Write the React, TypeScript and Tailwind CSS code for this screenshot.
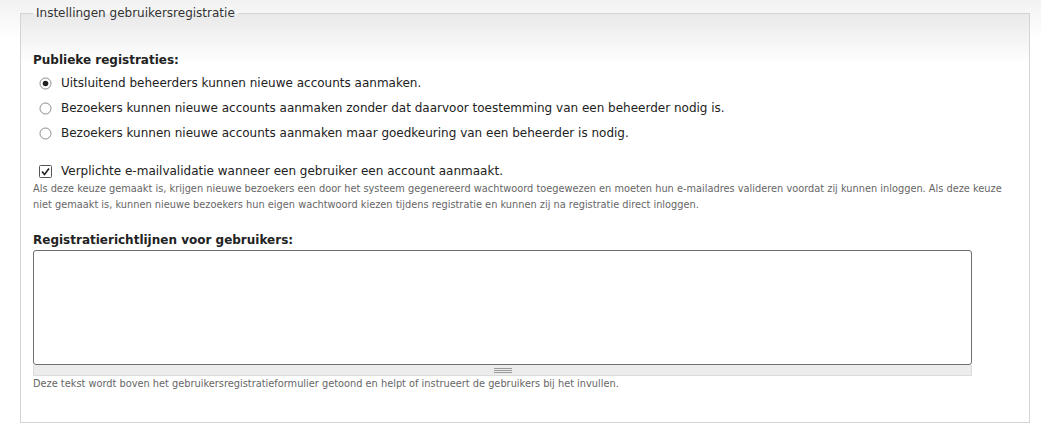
const font = "font-['DejaVu_Sans',sans-serif]"

const Radio = ({ checked }: { checked?: boolean }) => (
  <svg width="13" height="13" viewBox="0 0 13 13" className="shrink-0">
    <circle cx="6.5" cy="6.5" r="5.5" fill="#fff" stroke="#8a8a8a" strokeWidth="1" />
    {checked && <circle cx="6.5" cy="6.5" r="2.8" fill="#222" />}
  </svg>
)

const Check = () => (
  <svg width="13" height="13" viewBox="0 0 13 13" className="shrink-0">
    <rect x="0.5" y="0.5" width="12" height="12" rx="1" fill="#fff" stroke="#555" />
    <path d="M3 6.5 L5.5 9.5 L10 3.5" fill="none" stroke="#222" strokeWidth="1.6" />
  </svg>
)

const options = [
  { label: 'Uitsluitend beheerders kunnen nieuwe accounts aanmaken.', checked: true },
  { label: 'Bezoekers kunnen nieuwe accounts aanmaken zonder dat daarvoor toestemming van een beheerder nodig is.' },
  { label: 'Bezoekers kunnen nieuwe accounts aanmaken maar goedkeuring van een beheerder is nodig.' },
]

export default function App() {
  return (
    <div className={`${font} w-[1041px] h-[425px] bg-[linear-gradient(#f2f2f2,#fff_40px)] pt-[6px] pl-[20px] text-[#222]`}>
      <fieldset className="w-[1010px] h-[417px] border border-[#d4d4d4] bg-[linear-gradient(#e9e9e9,#fff_50px)] pl-[12px] pr-[12px]">
        <legend className="px-[3px] text-[12px] text-[#333] leading-[14px]">Instellingen gebruikersregistratie</legend>

        <div className="mt-[33px] text-[12px] font-bold leading-[14px]">Publieke registraties:</div>
        <div className="mt-[9px] flex flex-col gap-[11px] pl-[6px]">
          {options.map((o) => (
            <label key={o.label} className="flex items-center gap-[9px] text-[12px] leading-[14px]">
              <Radio checked={o.checked} />
              <span>{o.label}</span>
            </label>
          ))}
        </div>

        <label className="mt-[24px] flex items-center gap-[9px] pl-[6px] text-[12px] leading-[14px]">
          <Check />
          <span>Verplichte e-mailvalidatie wanneer een gebruiker een account aanmaakt.</span>
        </label>
        <p className="mt-[3px] text-[9.8px] leading-[16px] text-[#666]">
          Als deze keuze gemaakt is, krijgen nieuwe bezoekers een door het systeem gegenereerd wachtwoord toegewezen en moeten hun e-mailadres valideren voordat zij kunnen inloggen. Als deze keuze niet gemaakt is, kunnen nieuwe bezoekers hun eigen wachtwoord kiezen tijdens registratie en kunnen zij na registratie direct inloggen.
        </p>

        <div className="mt-[20px] text-[12px] font-bold leading-[14px]">Registratierichtlijnen voor gebruikers:</div>
        <div className="mt-[3px] w-[939px]">
          <textarea className="block h-[115px] w-full resize-none rounded-[3px] border border-[#6f6f6f] bg-white" />
          <div className="flex h-[11px] items-center justify-center border border-t-0 border-[#dcdcdc] bg-[#ececec]">
            <div className="flex w-[18px] flex-col gap-[1px]">
              <div className="h-px bg-[#9a9a9a]" />
              <div className="h-px bg-[#9a9a9a]" />
              <div className="h-px bg-[#9a9a9a]" />
            </div>
          </div>
        </div>
        <p className="mt-0 text-[9.8px] leading-[16px] text-[#666]">
          Deze tekst wordt boven het gebruikersregistratieformulier getoond en helpt of instrueert de gebruikers bij het invullen.
        </p>
      </fieldset>
    </div>
  )
}
